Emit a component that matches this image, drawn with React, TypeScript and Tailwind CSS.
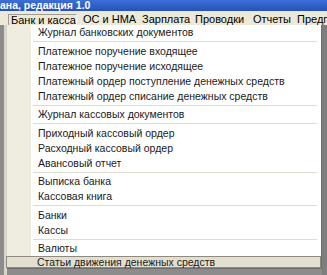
const groups: string[][] = [
  ["Журнал банковских документов"],
  [
    "Платежное поручение входящее",
    "Платежное поручение исходящее",
    "Платежный ордер поступление денежных средств",
    "Платежный ордер списание денежных средств",
  ],
  ["Журнал кассовых документов"],
  ["Приходный кассовый ордер", "Расходный кассовый ордер", "Авансовый отчет"],
  ["Выписка банка", "Кассовая книга"],
  ["Банки", "Кассы"],
  ["Валюты"],
];

const menuItems = [
  { label: "ОС и НМА", w: "w-[59px]" },
  { label: "Зарплата", w: "w-[53px]" },
  { label: "Проводки", w: "w-[58px]" },
  { label: "Отчеты", w: "w-[44px]" },
  { label: "Предп", w: "w-[40px]" },
];

export default function App() {
  return (
    <div
      className="w-[327px] h-[275px] overflow-hidden bg-[#8c8c8c] flex flex-col text-black"
      style={{ fontFamily: '"Liberation Sans", Arial, sans-serif' }}
    >
      {/* Title bar */}
      <div className="h-[11px] shrink-0 bg-gradient-to-b from-[#3d6fd6] to-[#2452b8] text-white font-bold text-[10.5px] leading-[11px] whitespace-nowrap">
        ана, редакция 1.0
      </div>

      {/* Menu bar */}
      <div className="h-[14px] shrink-0 bg-[#ece9d8] flex items-end pl-[8px] whitespace-nowrap text-[11px] leading-[11px] overflow-hidden">
        <div className="w-[69px] shrink-0 h-[11px] pl-[2px] border-t border-l border-[#a09d90] border-r border-r-white">
          Банк и касса
        </div>
        <div className="flex shrink-0 pl-[6px] h-[11px]">
          {menuItems.map((m) => (
            <span key={m.label} className={`${m.w} shrink-0`}>
              {m.label}
            </span>
          ))}
        </div>
      </div>

      {/* Body with dropdown */}
      <div className="flex flex-1">
        <div className="w-[4px] shrink-0 bg-[#8c8c8c]" />
        <div className="w-[3px] shrink-0 bg-[#d8d5c8]" />
        <div className="w-[315px] shrink-0 h-[244px] bg-white border-r border-b border-[#6e6e6e] flex flex-col relative">
          <div className="absolute left-0 top-0 bottom-0 w-[24px] bg-[#efece0]" />
          {groups.map((g, gi) => (
            <div key={gi} className="relative">
              {gi > 0 && (
                <div className="h-[3.5px] flex items-center pl-[26px] pr-[4px]">
                  <div className="h-px w-full bg-[#dedbd2]" />
                </div>
              )}
              {g.map((item) => (
                <div
                  key={item}
                  className="h-[15px] leading-[15px] pl-[31px] text-[10.5px] whitespace-nowrap text-[#1a1a1a]"
                >
                  {item}
                </div>
              ))}
            </div>
          ))}
          <div className="relative h-[12px] leading-[11px] pl-[30px] text-[10.5px] whitespace-nowrap text-[#1a1a1a] bg-[#e2dfd0] border border-[#8e8b7e] -ml-[1px]">
            Статьи движения денежных средств
          </div>
        </div>
        <div className="flex-1 bg-[#7e7e7e]" />
      </div>
    </div>
  );
}
